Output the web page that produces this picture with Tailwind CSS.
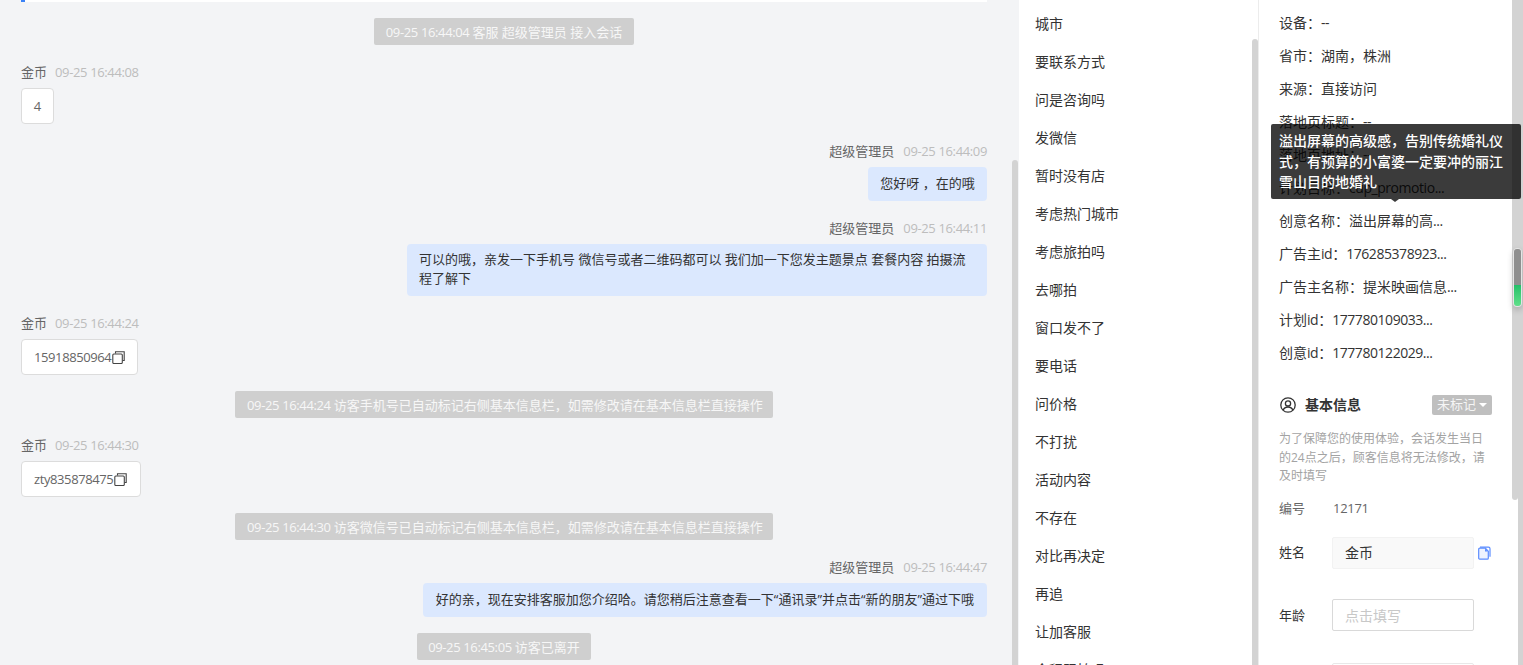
<!DOCTYPE html>
<html lang="zh">
<head>
    <meta charset="UTF-8">
    <title>会话详情</title>
    <script src="https://cdn.jsdelivr.net/npm/@tailwindcss/browser@4"></script>
</head>
<body class="h-[665px] overflow-hidden bg-white [font-family:'Open_Sans','Noto_Sans_CJK_SC',sans-serif] text-[13px] text-[#333]">
<div class="relative flex h-[665px] w-[1523px] overflow-hidden">

    <!-- 聊天记录 -->
    <div class="relative h-full w-[1019px] shrink-0 overflow-hidden bg-[#f3f4f6] pl-[21px] pr-[32px]">
        <div class="relative h-[2px] bg-white"><div class="h-[2px] w-[4px] bg-[#3b82f6]"></div></div>

        <div class="mt-[16px] flex justify-center"><div class="flex h-[27px] w-[260px] items-center justify-center whitespace-pre rounded-[2px] bg-[#cfcfcf] pt-[2px] text-[#f7f7f7]"><span class="tracking-[-0.36px]">09-25 16:44:04 </span>客服 超级管理员 接入会话</div></div>

        <div class="mt-[17px] flex h-[20px] items-center gap-[8px] pt-[2px] text-[#666]"><span>金币</span><span class="tracking-[-0.36px] text-[#bdbdbd]">09-25 16:44:08</span></div>
        <div class="mt-[6px] flex h-[36px] w-[33px] items-center justify-center rounded-[4px] border border-[#dcdcdc] bg-white pt-[2px] text-[#666]">4</div>

        <div class="mt-[17px] flex h-[20px] items-center justify-end gap-[9px] pt-[2px] text-[#666]"><span>超级管理员</span><span class="tracking-[-0.36px] text-[#bdbdbd]">09-25 16:44:09</span></div>
        <div class="mt-[6px] flex justify-end"><div class="flex h-[34px] w-[119px] items-center justify-center whitespace-pre rounded-[4px] bg-[#dbe8fe]">您好呀 ，在的哦</div></div>

        <div class="mt-[17px] flex h-[20px] items-center justify-end gap-[9px] pt-[2px] text-[#666]"><span>超级管理员</span><span class="tracking-[-0.36px] text-[#bdbdbd]">09-25 16:44:11</span></div>
        <div class="mt-[6px] flex justify-end"><div class="h-[52px] w-[580px] rounded-[4px] bg-[#dbe8fe] px-[12px] py-[6px] leading-[19px]">可以的哦，亲发一下手机号 微信号或者二维码都可以 我们加一下您发主题景点 套餐内容 拍摄流程了解下</div></div>

        <div class="mt-[17px] flex h-[20px] items-center gap-[8px] pt-[2px] text-[#666]"><span>金币</span><span class="tracking-[-0.36px] text-[#bdbdbd]">09-25 16:44:24</span></div>
        <div class="mt-[6px] flex h-[36px] w-[117px] items-center rounded-[4px] border border-[#dcdcdc] bg-white pl-[12px] text-[#666]">
            <span class="pt-[2px] tracking-[-0.4px]">15918850964</span>
            <svg class="ml-[1px] h-[13px] w-[13px] shrink-0" viewBox="0 0 13 13" fill="none" stroke="#444" stroke-width="1.1"><path d="M3.500 2.500V.8h8.700v8.700h-1.700"/><rect x=".8" y="3" width="9.500" height="9.500" rx="1"/></svg>
        </div>

        <div class="mt-[16px] flex justify-center"><div class="flex h-[27px] w-[538px] items-center whitespace-pre rounded-[2px] bg-[#cfcfcf] px-[12px] pt-[2px] text-[#f7f7f7]"><span class="tracking-[-0.36px]">09-25 16:44:24 </span>访客手机号已自动标记右侧基本信息栏，如需修改请在基本信息栏直接操作</div></div>

        <div class="mt-[17px] flex h-[20px] items-center gap-[8px] pt-[2px] text-[#666]"><span>金币</span><span class="tracking-[-0.36px] text-[#bdbdbd]">09-25 16:44:30</span></div>
        <div class="mt-[6px] flex h-[36px] w-[120px] items-center rounded-[4px] border border-[#dcdcdc] bg-white pl-[12px] text-[#666]">
            <span class="pt-[2px] tracking-[-0.4px]">zty835878475</span>
            <svg class="ml-[1px] h-[13px] w-[13px] shrink-0" viewBox="0 0 13 13" fill="none" stroke="#444" stroke-width="1.1"><path d="M3.500 2.500V.8h8.700v8.700h-1.700"/><rect x=".8" y="3" width="9.500" height="9.500" rx="1"/></svg>
        </div>

        <div class="mt-[16px] flex justify-center"><div class="flex h-[27px] w-[538px] items-center whitespace-pre rounded-[2px] bg-[#cfcfcf] px-[12px] pt-[2px] text-[#f7f7f7]"><span class="tracking-[-0.36px]">09-25 16:44:30 </span>访客微信号已自动标记右侧基本信息栏，如需修改请在基本信息栏直接操作</div></div>

        <div class="mt-[17px] flex h-[20px] items-center justify-end gap-[9px] pt-[2px] text-[#666]"><span>超级管理员</span><span class="tracking-[-0.36px] text-[#bdbdbd]">09-25 16:44:47</span></div>
        <div class="mt-[6px] flex justify-end"><div class="flex h-[34px] items-center whitespace-nowrap rounded-[4px] bg-[#dbe8fe] px-[13px]">好的亲，现在安排客服加您介绍哈。请您稍后注意查看一下“通讯录”并点击“新的朋友”通过下哦</div></div>

        <div class="mt-[16px] flex justify-center"><div class="flex h-[27px] w-[174px] items-center justify-center whitespace-pre rounded-[2px] bg-[#cfcfcf] pt-[2px] text-[#f7f7f7]"><span class="tracking-[-0.36px]">09-25 16:45:05 </span>访客已离开</div></div>

        <!-- 滚动条 -->
        <div class="absolute bottom-0 left-[1012px] top-[160px] w-[6px] rounded-t-[3px] bg-[#d3d3d3]"></div>
    </div>

    <!-- 快捷标签 -->
    <div class="relative h-full w-[239px] shrink-0 overflow-hidden bg-white pl-[16px] pt-[4px] text-[14px]">
        <div class="flex h-[38px] items-center">城市</div>
        <div class="flex h-[38px] items-center">要联系方式</div>
        <div class="flex h-[38px] items-center">问是咨询吗</div>
        <div class="flex h-[38px] items-center">发微信</div>
        <div class="flex h-[38px] items-center">暂时没有店</div>
        <div class="flex h-[38px] items-center">考虑热门城市</div>
        <div class="flex h-[38px] items-center">考虑旅拍吗</div>
        <div class="flex h-[38px] items-center">去哪拍</div>
        <div class="flex h-[38px] items-center">窗口发不了</div>
        <div class="flex h-[38px] items-center">要电话</div>
        <div class="flex h-[38px] items-center">问价格</div>
        <div class="flex h-[38px] items-center">不打扰</div>
        <div class="flex h-[38px] items-center">活动内容</div>
        <div class="flex h-[38px] items-center">不存在</div>
        <div class="flex h-[38px] items-center">对比再决定</div>
        <div class="flex h-[38px] items-center">再追</div>
        <div class="flex h-[38px] items-center">让加客服</div>
        <div class="flex h-[38px] items-center">全程跟拍吗</div>
        <div class="absolute bottom-0 left-[233px] top-[39px] w-[6px] rounded-t-[3px] bg-[#d3d3d3]"></div>
    </div>

    <!-- 访客信息 -->
    <div class="h-full w-[254px] shrink-0 overflow-hidden border-l border-[#ececec] bg-white pl-[20px] pr-[20px] pt-[6px]">
        <div class="flex h-[33px] items-center whitespace-pre text-[14px]">设备：<span class="tracking-[-0.45px]">--</span></div>
        <div class="flex h-[33px] items-center whitespace-pre text-[14px]">省市：湖南，株洲</div>
        <div class="flex h-[33px] items-center whitespace-pre text-[14px]">来源：直接访问</div>
        <div class="flex h-[33px] items-center whitespace-pre text-[14px]">落地页标题：<span class="tracking-[-0.45px]">--</span></div>
        <div class="flex h-[33px] items-center whitespace-pre text-[14px]">落地页地址：<span class="tracking-[-0.45px]">--</span></div>
        <div class="flex h-[33px] items-center whitespace-pre text-[14px]">计划目标：<span class="tracking-[-0.45px]">cup_promotio...</span></div>
        <div class="flex h-[33px] items-center whitespace-pre text-[14px]">创意名称：溢出屏幕的高<span class="tracking-[-0.45px]">...</span></div>
        <div class="flex h-[33px] items-center whitespace-pre text-[14px]">广告主<span class="tracking-[-0.45px]">id</span>：<span class="tracking-[-0.45px]">176285378923...</span></div>
        <div class="flex h-[33px] items-center whitespace-pre text-[14px]">广告主名称：提米映画信息<span class="tracking-[-0.45px]">...</span></div>
        <div class="flex h-[33px] items-center whitespace-pre text-[14px]">计划<span class="tracking-[-0.45px]">id</span>：<span class="tracking-[-0.45px]">177780109033...</span></div>
        <div class="flex h-[33px] items-center whitespace-pre text-[14px]">创意<span class="tracking-[-0.45px]">id</span>：<span class="tracking-[-0.45px]">177780122029...</span></div>

        <div class="mt-[26px] flex h-[20px] items-center">
            <svg class="ml-[1px] h-[16px] w-[16px] shrink-0" viewBox="0 0 16 16" fill="none" stroke="#333" stroke-width="1.3"><circle cx="8" cy="8" r="7.200"/><circle cx="8" cy="6.400" r="2.600"/><path d="M3.200 13.300c.7-2.200 2.600-3.300 4.800-3.300s4.100 1.100 4.800 3.300"/></svg>
            <span class="ml-[9px] pb-[2px] text-[14px] font-bold">基本信息</span>
            <div class="ml-auto flex h-[20px] w-[60px] items-center justify-center gap-[3px] rounded-[2px] bg-[#bfbfbf] text-[#f5f5f5]">未标记<span class="h-0 w-0 border-x-[4px] border-t-[4px] border-x-transparent border-t-white"></span></div>
        </div>
        <p class="mt-[15px] text-[12px] leading-[18.5px] text-[#a3a3a3]">为了保障您的使用体验，会话发生当日的24点之后，顾客信息将无法修改，请及时填写</p>

        <div class="mt-[13px] flex h-[20px] items-center text-[#666]"><span class="w-[54px]">编号</span><span class="tracking-[-0.3px]">12171</span></div>
        <div class="mt-[18px] flex h-[32px] items-center">
            <span class="w-[53px]">姓名</span>
            <div class="flex h-[32px] w-[142px] items-center rounded-[2px] border border-[#f2f2f2] bg-[#f9f9f9] pl-[12px] text-[14px]">金币</div>
            <svg class="ml-[3px] h-[14px] w-[14px] shrink-0" viewBox="0 0 14 14" fill="none" stroke="#5b8cff" stroke-width="1.2"><path d="M3 1.200h8.500a1.500 1.500 0 0 1 1.500 1.500v8" /><path d="M1.700 3.200a1 1 0 0 1 1-1h5.600l3 3v7a1 1 0 0 1-1 1H2.700a1 1 0 0 1-1-1z" fill="#eef3ff"/><path d="M8 2.500v3h3z" fill="#5b8cff" stroke="none"/></svg>
        </div>
        <div class="mt-[30px] flex h-[32px] items-center">
            <span class="w-[53px] pt-[3px]">年龄</span>
            <div class="flex h-[32px] w-[142px] items-center rounded-[2px] border border-[#d9d9d9] bg-white pl-[12px] pt-[2px] text-[14px] text-[#c8c8c8]">点击填写</div>
        </div>
        <div class="ml-[53px] mt-[32px] h-[32px] w-[142px] rounded-[2px] border border-[#e8e8e8]"></div>
    </div>

    <!-- 右侧滚动条 -->
    <div class="relative h-full w-[11px] shrink-0 bg-white">
        <div class="absolute left-0 top-0 h-[500px] w-[6px] rounded-b-[3px] bg-[#d3d3d3]"></div>
        <div class="absolute bottom-0 right-0 top-0 w-[5px] bg-[#d3d3d3]"></div>
    </div>

    <!-- 悬浮进度条 -->
    <div class="absolute left-[1513px] top-[248px] flex h-[59px] w-[9px] flex-col overflow-hidden rounded-[4px] border border-[#e5e5e5] shadow-[0_3px_6px_rgba(0,0,0,0.2)]">
        <div class="h-[36px] bg-[#8f8f8f]"></div>
        <div class="flex-1 bg-gradient-to-b from-[#22c069] to-[#5fe08a]"></div>
    </div>

    <!-- 提示框 -->
    <div class="absolute left-[1271px] top-[124px] h-[75px] w-[250px] rounded-[2px] bg-black/[0.77] px-[8px] pt-[7px] text-[14px] font-medium leading-[20.5px] text-white">
        溢出屏幕的高级感，告别传统婚礼仪式，有预算的小富婆一定要冲的丽江雪山目的地婚礼
        <div class="absolute left-[120px] top-[75px] h-0 w-0 border-x-[4px] border-t-[3px] border-x-transparent border-t-[#3a3a3a]"></div>
    </div>
</div>
</body>
</html>
